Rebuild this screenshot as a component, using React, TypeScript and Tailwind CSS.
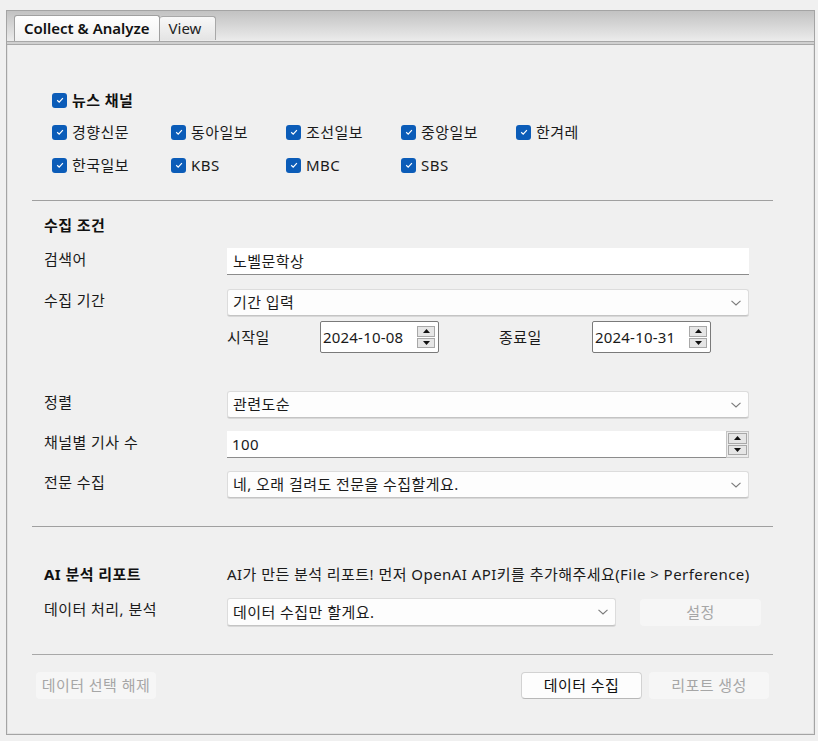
import React from "react";

const FONT = { fontFamily: '"Segoe UI", "Noto Sans", "Noto Sans CJK KR", sans-serif' };

function Check({ label, bold = false }: { label: string; bold?: boolean }) {
  return (
    <div className="flex items-center gap-[5px]">
      <span className="flex h-[15px] w-[15px] items-center justify-center rounded-[3px] bg-[#0b5cb8]">
        <svg width="10" height="10" viewBox="0 0 10 10">
          <path d="M2.2 5.2 L4.2 7.1 L7.9 3.1" fill="none" stroke="#ffffff" strokeWidth="1.2" />
        </svg>
      </span>
      <span className={bold ? "font-bold text-[#111]" : "text-[#1a1a1a]"}>{label}</span>
    </div>
  );
}

function Chevron() {
  return (
    <svg width="12" height="8" viewBox="0 0 12 8" className="shrink-0">
      <path d="M1.5 1.8 L6 6 L10.5 1.8" fill="none" stroke="#7a7a7a" strokeWidth="1.1" />
    </svg>
  );
}

function Select({ value, className = "" }: { value: string; className?: string }) {
  return (
    <div
      className={`flex h-[27px] items-center justify-between rounded-[3px] border border-[#dcdcdc] border-b-[#c4c4c4] bg-[#fdfdfd] pl-[5px] pr-[6px] shadow-[0_1px_0_#d8d8d8] ${className}`}
    >
      <span>{value}</span>
      <Chevron />
    </div>
  );
}

function Spin({ small = false }: { small?: boolean }) {
  const btn = "flex flex-1 items-center justify-center border border-[#a8a8a8] bg-[#e6e6e6]";
  return (
    <div className={`flex flex-col gap-[1px] ${small ? "w-[18px]" : "w-[19px]"} h-[24px] py-[1px]`}>
      <div className={btn}>
        <svg width="7" height="4" viewBox="0 0 7 4"><path d="M0 4 L3.5 0 L7 4 Z" fill="#111" /></svg>
      </div>
      <div className={btn}>
        <svg width="7" height="4" viewBox="0 0 7 4"><path d="M0 0 L3.5 4 L7 0 Z" fill="#111" /></svg>
      </div>
    </div>
  );
}

function DateBox({ value }: { value: string }) {
  return (
    <div className="flex h-[32px] w-[119px] items-center justify-between rounded-[2px] border border-[#7a7a7a] bg-white pl-[2px] pr-[3px]">
      <span className="tracking-[0.2px]">{value}</span>
      <Spin small />
    </div>
  );
}

function Button({ label, disabled = false, className = "" }: { label: string; disabled?: boolean; className?: string }) {
  return (
    <div
      className={`flex h-[27px] items-center justify-center rounded-[4px] ${
        disabled
          ? "bg-[#f6f6f6] text-[#a6a6a6]"
          : "border border-[#d2d2d2] border-b-[#b8b8b8] bg-[#fdfdfd] text-[#111]"
      } ${className}`}
    >
      {label}
    </div>
  );
}

function Row({ label, children, className = "" }: { label: string; children: React.ReactNode; className?: string }) {
  return (
    <div className={`grid grid-cols-[183px_1fr] ${className}`}>
      <div className="pt-[1px] leading-[20px]">{label}</div>
      <div>{children}</div>
    </div>
  );
}

export default function App() {
  return (
    <div
      className="h-[741px] w-[818px] bg-[#f0f0f0] pl-[6px] pr-[3px] pt-[10px] text-[15px] tracking-[0.45px] text-[#1a1a1a]"
      style={FONT}
    >
      <div className="flex h-[725px] flex-col border border-[#a4a4a4] shadow-[inset_0_0_0_1px_#e2e2e2]">
        {/* tab header */}
        <div className="flex h-[30px] items-end bg-gradient-to-b from-[#c2c2c2] to-[#ececec] pl-[7px] tracking-normal">
          <div className="flex h-[26px] items-center rounded-t-[3px] border border-b-0 border-[#a0a0a0] bg-gradient-to-b from-[#ffffff] to-[#f2f2f2] px-[9px] font-semibold text-[#111]">
            Collect &amp; Analyze
          </div>
          <div className="mb-[1px] flex h-[24px] items-center rounded-t-[3px] border border-b-0 border-l-0 border-[#a8a8a8] bg-gradient-to-b from-[#f8f8f8] to-[#e4e4e4] pl-[9px] pr-[14px] text-[#222]">
            View
          </div>
        </div>
        <div className="h-[4px] border-y border-[#a8a8a8] bg-[#d0d0d0]" />

        {/* pane */}
        <div className="flex-1 pl-[25px] pr-[41px]">
          <div className="flex flex-col pl-[20px] pt-[43px]">
            <div className="flex h-[24px] items-center">
              <Check label="뉴스 채널" bold />
            </div>
            <div className="mt-[8px] grid h-[24px] grid-cols-[119px_115px_115px_115px_115px] items-center">
              <Check label="경향신문" />
              <Check label="동아일보" />
              <Check label="조선일보" />
              <Check label="중앙일보" />
              <Check label="한겨레" />
            </div>
            <div className="mt-[9px] grid h-[24px] grid-cols-[119px_115px_115px_115px_115px] items-center">
              <Check label="한국일보" />
              <Check label="KBS" />
              <Check label="MBC" />
              <Check label="SBS" />
            </div>
          </div>

          <div className="mt-[23px] h-px bg-[#a0a0a0]" />

          <div className="pl-[12px] pr-[24px]">
            <div className="mt-[12px] h-[24px] font-bold leading-[24px] text-[#111]">수집 조건</div>
            <Row label="검색어" className="mt-[11px]">
              <div className="flex h-[27px] items-center border-b border-[#8c8c8c] bg-white pl-[6px]">노벨문학상</div>
            </Row>
            <Row label="수집 기간" className="mt-[14px]">
              <Select value="기간 입력" />
            </Row>
            <div className="mt-[5px] grid grid-cols-[183px_1fr]">
              <div />
              <div className="flex items-center">
                <span className="w-[93px]">시작일</span>
                <DateBox value="2024-10-08" />
                <span className="ml-[60px] w-[93px]">종료일</span>
                <DateBox value="2024-10-31" />
              </div>
            </div>
            <Row label="정렬" className="mt-[38px]">
              <Select value="관련도순" />
            </Row>
            <Row label="채널별 기사 수" className="mt-[13px]">
              <div className="flex h-[27px] items-center justify-between border-b border-[#8c8c8c] bg-white pl-[5px]">
                <span>100</span>
                <div className="flex h-[27px] items-center border border-[#c4c4c4] bg-[#ececec] px-[1px]">
                  <Spin />
                </div>
              </div>
            </Row>
            <Row label="전문 수집" className="mt-[13px]">
              <Select value="네, 오래 걸려도 전문을 수집할게요." />
            </Row>
          </div>

          <div className="mt-[28px] h-px bg-[#a0a0a0]" />

          <div className="pl-[12px] pr-[11px]">
            <div className="mt-[35px] grid grid-cols-[183px_1fr] leading-[24px]">
              <div className="font-bold text-[#111]">AI 분석 리포트</div>
              <div className="whitespace-nowrap">AI가 만든 분석 리포트! 먼저 OpenAI API키를 추가해주세요(File &gt; Perference)</div>
            </div>
            <div className="mt-[12px] grid grid-cols-[183px_1fr]">
              <div className="pt-[1px] leading-[20px]">데이터 처리, 분석</div>
              <div className="flex items-center">
                <Select value="데이터 수집만 할게요." className="h-[28px] w-[389px]" />
                <Button label="설정" disabled className="ml-[24px] h-[26px] w-[121px]" />
              </div>
            </div>
          </div>

          <div className="mt-[28px] h-px bg-[#a8a8a8]" />

          <div className="mt-[17px] flex items-center justify-between px-[4px]">
            <Button label="데이터 선택 해제" disabled className="w-[120px]" />
            <div className="flex items-center gap-[7px]">
              <Button label="데이터 수집" className="w-[121px]" />
              <Button label="리포트 생성" disabled className="w-[120px]" />
            </div>
          </div>
        </div>
      </div>
    </div>
  );
}
